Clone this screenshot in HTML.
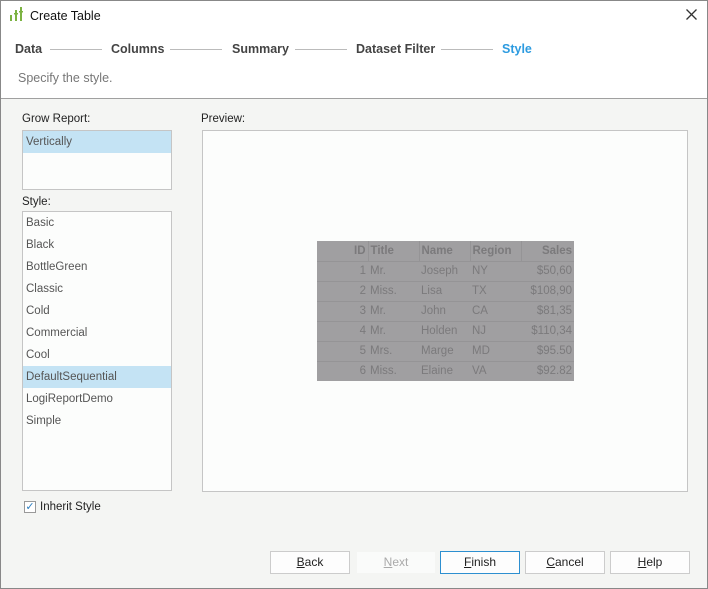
<!DOCTYPE html><html><head><style>
*{box-sizing:border-box;margin:0;padding:0}
body{width:708px;height:589px;background:#f4f5f3;font-family:"Liberation Sans",sans-serif;font-size:12px;color:#222;position:relative;overflow:hidden}
.a{position:absolute}
.hdr{left:0;top:0;width:708px;height:99px;background:#fff;border-bottom:1px solid #a0a0a0}
.step{font-weight:bold;color:#444;font-size:12.5px;top:42px}
.line{height:1px;background:#bbb;top:49px}
.box{background:#fcfdfc;border:1px solid #c5c5c5}
.it{position:absolute;left:0;width:100%;height:22px;line-height:22px;padding-left:3px;color:#555;font-size:11.5px}
.sel{background:#c4e3f4}
.btn{top:551px;width:80px;height:23px;border:1px solid #ccc;background:#fdfdfd;text-align:center;line-height:21px;font-size:12px}
table{border-collapse:collapse;background:#a09fa1;font-size:11.5px;color:#7b7a7c}
td{height:20px;border-bottom:1px solid #959496;padding:0 2px}
th{height:20px;color:#7b7a7c;border-right:1px solid #959496;border-bottom:1px solid #959496;padding:0 2px}
</style></head><body>
<div class="a hdr"></div>
<div class="a" style="left:0;top:0;width:708px;height:589px;border:1px solid #888;z-index:5;pointer-events:none"></div>
<svg class="a" style="left:10px;top:7px" width="14" height="16"><g fill="#7cb342"><rect x="0" y="8" width="2" height="6"/><rect x="5" y="3" width="2" height="11"/><rect x="10" y="0" width="2" height="14"/><rect x="4" y="6" width="4" height="1.5"/><rect x="9" y="4" width="4" height="1.5"/></g></svg>
<div class="a" style="left:30px;top:9px;font-size:12.5px;color:#111">Create Table</div>
<svg class="a" style="left:686px;top:9px" width="11" height="11"><path d="M0.5 0.5L10.5 10.5M10.5 0.5L0.5 10.5" stroke="#333" stroke-width="1.3"/></svg>
<div class="a step" style="left:15px">Data</div>
<div class="a line" style="left:50px;width:52px"></div>
<div class="a step" style="left:111px">Columns</div>
<div class="a line" style="left:170px;width:52px"></div>
<div class="a step" style="left:232px">Summary</div>
<div class="a line" style="left:295px;width:52px"></div>
<div class="a step" style="left:356px">Dataset Filter</div>
<div class="a line" style="left:441px;width:52px"></div>
<div class="a step" style="left:502px;color:#2d9be0">Style</div>
<div class="a" style="left:18px;top:71px;color:#777;font-size:12.5px">Specify the style.</div>
<div class="a" style="left:22px;top:113px;font-size:11.5px">Grow Report:</div>
<div class="a box" style="left:22px;top:130px;width:150px;height:60px"><div class="it sel" style="top:0">Vertically</div></div>
<div class="a" style="left:22px;top:196px;font-size:11.5px">Style:</div>
<div class="a box" style="left:22px;top:211px;width:150px;height:280px">
<div class="it" style="top:0">Basic</div><div class="it" style="top:22px">Black</div><div class="it" style="top:44px">BottleGreen</div><div class="it" style="top:66px">Classic</div><div class="it" style="top:88px">Cold</div><div class="it" style="top:110px">Commercial</div><div class="it" style="top:132px">Cool</div><div class="it sel" style="top:154px">DefaultSequential</div><div class="it" style="top:176px">LogiReportDemo</div><div class="it" style="top:198px">Simple</div></div>
<div class="a" style="left:24px;top:501px;width:12px;height:12px;border:1px solid #999;background:#fff;color:#2d7fc0;font-size:11px;line-height:10px;text-align:center">✓</div>
<div class="a" style="left:40px;top:501px;font-size:11.5px">Inherit Style</div>
<div class="a" style="left:201px;top:113px;font-size:11.5px">Preview:</div>
<div class="a box" style="left:202px;top:130px;width:486px;height:362px"></div>
<table class="a" style="left:317px;top:241px;width:257px">
<tr><th style="width:51px;text-align:right">ID</th><th style="width:51px;text-align:left">Title</th><th style="width:51px;text-align:left">Name</th><th style="width:51px;text-align:left">Region</th><th style="text-align:right;border-right:0">Sales</th></tr>
<tr><td align="right">1</td><td>Mr.</td><td>Joseph</td><td>NY</td><td align="right">$50,60</td></tr>
<tr><td align="right">2</td><td>Miss.</td><td>Lisa</td><td>TX</td><td align="right">$108,90</td></tr>
<tr><td align="right">3</td><td>Mr.</td><td>John</td><td>CA</td><td align="right">$81,35</td></tr>
<tr><td align="right">4</td><td>Mr.</td><td>Holden</td><td>NJ</td><td align="right">$110,34</td></tr>
<tr><td align="right">5</td><td>Mrs.</td><td>Marge</td><td>MD</td><td align="right">$95.50</td></tr>
<tr><td align="right" style="border:0">6</td><td style="border:0">Miss.</td><td style="border:0">Elaine</td><td style="border:0">VA</td><td align="right" style="border:0">$92.82</td></tr>
</table>
<div class="a btn" style="left:270px"><u>B</u>ack</div>
<div class="a btn" style="left:356px;border-color:#f4f5f3;background:#fafbfa;color:#aaa"><u>N</u>ext</div>
<div class="a btn" style="left:440px;border-color:#2d8fd0"><u>F</u>inish</div>
<div class="a btn" style="left:525px"><u>C</u>ancel</div>
<div class="a btn" style="left:610px"><u>H</u>elp</div>
</body></html>
